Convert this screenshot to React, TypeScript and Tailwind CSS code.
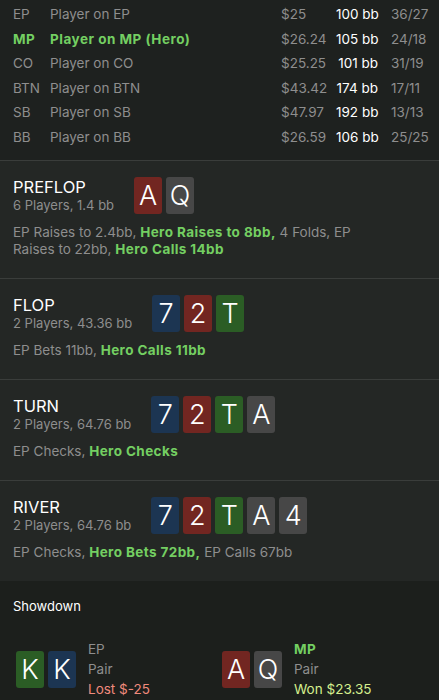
import React from "react";

type Suit = "r" | "g" | "b" | "k";
const suitBg: Record<Suit, string> = {
  r: "bg-[#722621]",
  g: "bg-[#2b5d25]",
  b: "bg-[#1c3552]",
  k: "bg-[#474747]",
};

function Card({ v, s }: { v: string; s: Suit }) {
  return (
    <div
      className={`${suitBg[s]} w-[28px] h-[37px] rounded-[3px] flex items-center justify-center text-white text-[27px] font-light leading-none`}
    >
      {v}
    </div>
  );
}

const players = [
  { pos: "EP", name: "Player on EP", stack: "$25", bb: "100 bb", stat: "36/27" },
  { pos: "MP", name: "Player on MP (Hero)", stack: "$26.24", bb: "105 bb", stat: "24/18", hero: true },
  { pos: "CO", name: "Player on CO", stack: "$25.25", bb: "101 bb", stat: "31/19" },
  { pos: "BTN", name: "Player on BTN", stack: "$43.42", bb: "174 bb", stat: "17/11" },
  { pos: "SB", name: "Player on SB", stack: "$47.97", bb: "192 bb", stat: "13/13" },
  { pos: "BB", name: "Player on BB", stack: "$26.59", bb: "106 bb", stat: "25/25" },
];

function Street({
  title,
  sub,
  cards,
  children,
}: {
  title: string;
  sub: string;
  cards: [string, Suit][];
  children: React.ReactNode;
}) {
  return (
    <div className="bg-[#242725] border-t border-[#3a3d3b] pl-[13px] pr-3 pt-4 pb-5">
      <div className="flex items-center gap-5">
        <div className="flex flex-col">
          <div className="text-[16.5px] leading-[20px] text-white">{title}</div>
          <div className="text-[13px] leading-[17px] text-[#8e8e8e]">{sub}</div>
        </div>
        <div className="flex gap-[4px]">
          {cards.map(([v, s], i) => (
            <Card key={i} v={v} s={s} />
          ))}
        </div>
      </div>
      <div className="mt-[10px] w-[365px] text-[13.5px] leading-[17px] text-[#8e8e8e]">{children}</div>
    </div>
  );
}

const H = ({ children }: { children: React.ReactNode }) => (
  <span className="font-bold tracking-[0.4px] text-[#74cf62]">{children}</span>
);

export default function App() {
  return (
    <div
      className="w-[439px] h-[700px] overflow-hidden bg-[#1e211f]"
      style={{ fontFamily: 'Inter, "Liberation Sans", Arial, sans-serif' }}
    >
      <div className="pt-[2px] pb-[11px] h-[160px]">
        {players.map((p) => (
          <div key={p.pos} className="flex items-center h-[24.5px] text-[13.5px] whitespace-nowrap">
            <div
              className={`w-[50px] pl-[13px] ${p.hero ? "font-bold tracking-[0.4px] text-[#74cf62]" : "text-[#8e8e8e]"}`}
            >
              {p.pos}
            </div>
            <div
              className={`w-[231px] ${p.hero ? "font-bold tracking-[0.5px] text-[#74cf62]" : "text-[#8e8e8e]"}`}
            >
              {p.name}
            </div>
            <div className="w-[55px] text-[#8e8e8e]">{p.stack}</div>
            <div className="w-[42px] text-right text-white">{p.bb}</div>
            <div className="pl-[13px] text-[#8e8e8e]">{p.stat}</div>
          </div>
        ))}
      </div>
      <Street
        title="PREFLOP"
        sub="6 Players, 1.4 bb"
        cards={[
          ["A", "r"],
          ["Q", "k"],
        ]}
      >
        EP Raises to 2.4bb, <H>Hero Raises to 8bb,</H> 4 Folds, EP Raises to 22bb, <H>Hero Calls 14bb</H>
      </Street>
      <Street
        title="FLOP"
        sub="2 Players, 43.36 bb"
        cards={[
          ["7", "b"],
          ["2", "r"],
          ["T", "g"],
        ]}
      >
        EP Bets 11bb, <H>Hero Calls 11bb</H>
      </Street>
      <Street
        title="TURN"
        sub="2 Players, 64.76 bb"
        cards={[
          ["7", "b"],
          ["2", "r"],
          ["T", "g"],
          ["A", "k"],
        ]}
      >
        EP Checks, <H>Hero Checks</H>
      </Street>
      <Street
        title="RIVER"
        sub="2 Players, 64.76 bb"
        cards={[
          ["7", "b"],
          ["2", "r"],
          ["T", "g"],
          ["A", "k"],
          ["4", "k"],
        ]}
      >
        EP Checks, <H>Hero Bets 72bb,</H> EP Calls 67bb
      </Street>
      <div className="bg-[#1c1f1c] pt-[17px] pb-4">
        <div className="pl-[13px] text-[13px] leading-[17px] text-white">Showdown</div>
        <div className="flex mt-[24px] pl-4">
          <div className="w-[206px] flex items-center">
            <div className="flex gap-[4px]">
              <Card v="K" s="g" />
              <Card v="K" s="b" />
            </div>
            <div className="ml-3 text-[13.5px] leading-[20px]">
              <div className="text-[#8e8e8e]">EP</div>
              <div className="text-[#8e8e8e]">Pair</div>
              <div className="text-[#ef8a7c]">Lost $-25</div>
            </div>
          </div>
          <div className="flex items-center">
            <div className="flex gap-[4px]">
              <Card v="A" s="r" />
              <Card v="Q" s="k" />
            </div>
            <div className="ml-3 text-[13.5px] leading-[20px]">
              <div className="font-bold tracking-[0.4px] text-[#74cf62]">MP</div>
              <div className="text-[#8e8e8e]">Pair</div>
              <div className="text-[#d6f08e]">Won $23.35</div>
            </div>
          </div>
        </div>
      </div>
    </div>
  );
}
